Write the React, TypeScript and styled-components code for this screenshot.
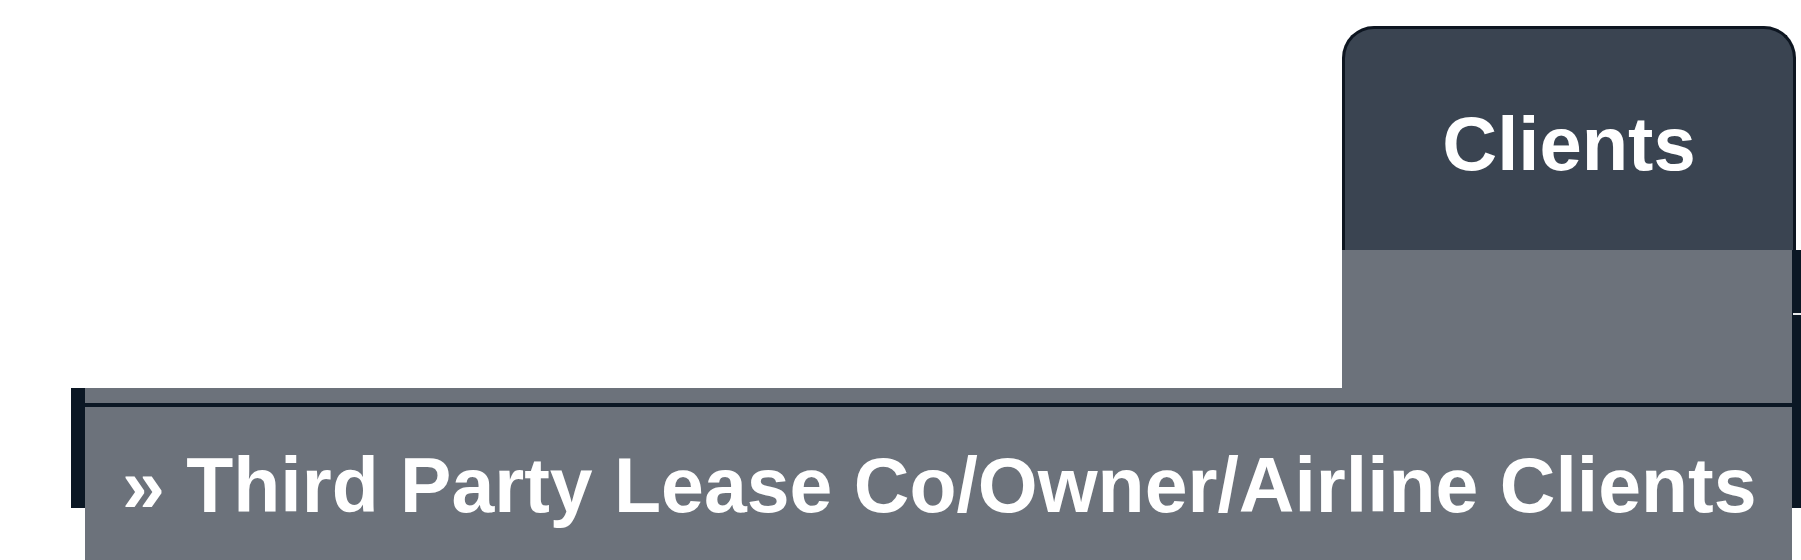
import React from 'react';
import styled, { createGlobalStyle } from 'styled-components';

const GlobalStyle = createGlobalStyle`
  body {
    margin: 0;
    background: #ffffff;
    font-family: 'Liberation Sans', Arial, sans-serif;
  }
`;

const Page = styled.div`
  position: relative;
  width: 1801px;
  height: 560px;
  padding-top: 26px;
  box-sizing: border-box;
  overflow: hidden;
  background: #ffffff;
`;

const MenuBar = styled.nav`
  display: flex;
  align-items: flex-end;
  height: 482px;
  margin-left: 71px;
`;

const BarFill = styled.div`
  flex: 1;
  height: 120px;
  background: #0b1724;
`;

const MenuItem = styled.div`
  display: flex;
  flex-direction: column;
  align-self: flex-start;
  width: 450px;
`;

const TabHead = styled.div`
  display: flex;
  justify-content: center;
  width: 454px;
  height: 224px;
  padding-top: 77px;
  box-sizing: border-box;
  background: #3a4451;
  border: 3px solid #0d1520;
  border-bottom: none;
  border-radius: 32px 32px 0 0;
`;

const TabLabel = styled.span`
  font-size: 76px;
  font-weight: 700;
  line-height: 1;
  color: #ffffff;
`;

const TabHover = styled.div`
  height: 153px;
  background: #6c727b;
`;

const NextItem = styled.div`
  position: relative;
  width: 9px;
  height: 258px;
  background: #0b1724;

  &::before {
    content: '';
    position: absolute;
    top: 63px;
    left: 1px;
    right: 0;
    height: 2px;
    background: #e8eaec;
  }
`;

const Dropdown = styled.ul`
  position: absolute;
  top: 388px;
  left: 85px;
  width: 1707px;
  bottom: 0;
  margin: 0;
  padding: 15px 0 0;
  list-style: none;
  background: #6c727b;
`;

const DropdownItem = styled.li`
  height: 100%;
  padding: 40px 0 0 37px;
  box-sizing: border-box;
  border-top: 4px solid #0b1724;
  font-size: 77px;
  font-weight: 700;
  line-height: 1;
  color: #ffffff;
  white-space: nowrap;
`;

export default function App() {
  return (
    <>
      <GlobalStyle />
      <Page>
        <MenuBar>
          <BarFill />
          <MenuItem>
            <TabHead>
              <TabLabel>Clients</TabLabel>
            </TabHead>
            <TabHover />
          </MenuItem>
          <NextItem />
        </MenuBar>
        <Dropdown>
          <DropdownItem>» Third Party Lease Co/Owner/Airline Clients</DropdownItem>
        </Dropdown>
      </Page>
    </>
  );
}
